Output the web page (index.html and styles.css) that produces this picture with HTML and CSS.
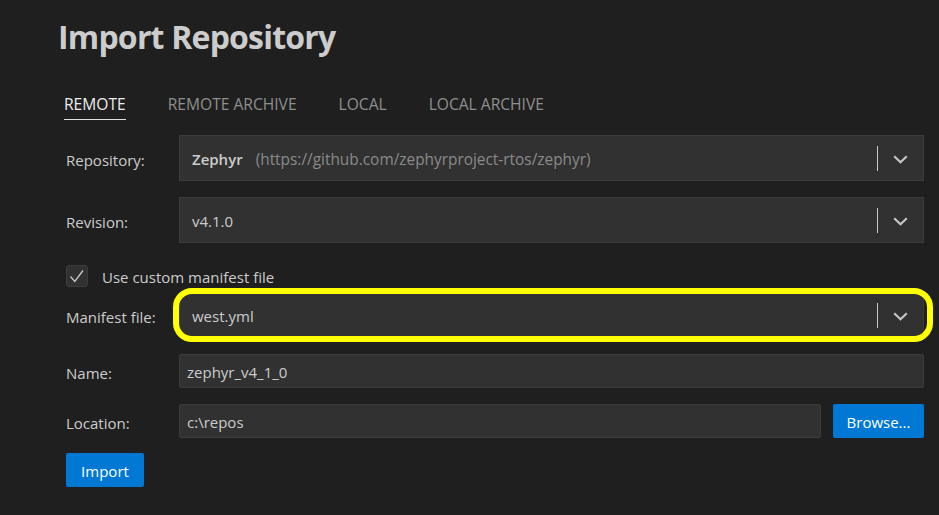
FILE: index.html
```html
<!DOCTYPE html>
<html lang="en">
  <head>
    <meta charset="UTF-8" />
    <meta name="viewport" content="width=device-width, initial-scale=1.0" />
    <title>Import Repository</title>
    <link rel="stylesheet" href="styles.css">
  </head>
  <body class="body">
    <div class="page">
      <h1 class="title">Import Repository</h1>

      <nav class="tabs">
        <span class="tab active">REMOTE</span>
        <span class="tab">REMOTE ARCHIVE</span>
        <span class="tab">LOCAL</span>
        <span class="tab">LOCAL ARCHIVE</span>
      </nav>

      <form class="form">
        <div class="row">
          <label class="label">Repository:</label>
          <div class="select">
            <span class="value"><span class="strong">Zephyr</span><span class="hint">(https://github.com/zephyrproject-rtos/zephyr)</span></span>
            <span class="sep"></span>
            <span class="chev">
              <svg width="15" height="9" viewBox="0 0 15 9"><path d="M1.2 1.2 L7.5 7.3 L13.8 1.2" fill="none" stroke="#c5c5c5" stroke-width="2.2"/></svg>
            </span>
          </div>
        </div>

        <div class="row row-wide">
          <label class="label">Revision:</label>
          <div class="select">
            <span class="value">v4.1.0</span>
            <span class="sep"></span>
            <span class="chev">
              <svg width="15" height="9" viewBox="0 0 15 9"><path d="M1.2 1.2 L7.5 7.3 L13.8 1.2" fill="none" stroke="#c5c5c5" stroke-width="2.2"/></svg>
            </span>
          </div>
        </div>

        <div class="check-row">
          <span class="checkbox">
            <svg width="22" height="22" viewBox="0 0 22 22"><path d="M4.5 11.5 L8.8 16.5 L17 5.5" fill="none" stroke="#c8c8c8" stroke-width="1.3"/></svg>
          </span>
          <span class="check-text">Use custom manifest file</span>
        </div>

        <div class="row">
          <label class="label">Manifest file:</label>
          <div class="select marked">
            <span class="value">west.yml</span>
            <span class="sep"></span>
            <span class="chev">
              <svg width="15" height="9" viewBox="0 0 15 9"><path d="M1.2 1.2 L7.5 7.3 L13.8 1.2" fill="none" stroke="#c5c5c5" stroke-width="2.2"/></svg>
            </span>
          </div>
        </div>

        <div class="row">
          <label class="label">Name:</label>
          <input type="text" class="text-input" value="zephyr_v4_1_0">
        </div>

        <div class="row row-last">
          <label class="label">Location:</label>
          <div class="location">
            <input type="text" class="text-input" value="c:\repos">
            <button type="button" class="btn browse">Browse...</button>
          </div>
        </div>

        <button type="button" class="btn import">Import</button>
      </form>
    </div>
  </body>
</html>
```

FILE: styles.css
```css
.body {
  margin: 0;
  background-color: #1f1f1f;
  color: #cccccc;
  font-family: "Open Sans", "Noto Sans", sans-serif;
  font-size: 15px;
}
.page {
  padding: 17px 15px 0 58px;
}
.title {
  margin: 0;
  font-size: 32px;
  line-height: 40px;
  font-weight: 700;
  letter-spacing: -0.8px;
  color: #cccccc;
}
.tabs {
  display: flex;
  gap: 42px;
  margin: 37px 0 0 6px;
}
.tab {
  font-size: 15.6px;
  line-height: 20px;
  padding-bottom: 5px;
  color: #8f8f8f;
  border-bottom: 1px solid transparent;
}
.tab.active {
  color: #ececec;
  border-bottom-color: #e0e0e0;
}

.form {
  margin: 15px 0 0 8px;
}
.row {
  display: grid;
  grid-template-columns: 113px 1fr;
  align-items: center;
  margin-bottom: 16px;
}
.row-wide {
  margin-bottom: 22px;
}
.row-last {
  margin-bottom: 15px;
}
.label {
  padding-top: 3px;
}

.select {
  position: relative;
  display: flex;
  align-items: center;
  height: 46px;
  box-sizing: border-box;
  background-color: #313131;
  border: 1px solid #3c3c3c;
}
.select .value {
  flex: 1;
  padding-left: 12px;
  padding-top: 2px;
}
.select .strong {
  font-weight: 600;
  margin-right: 13px;
}
.select .hint {
  color: #8a8a8a;
  font-size: 15.4px;
}
.select .sep {
  width: 1px;
  height: 25px;
  background-color: #c8c8c8;
}
.select .chev {
  width: 45px;
  display: flex;
  justify-content: center;
  padding-top: 2px;
}

/* yellow annotation ring round the manifest field */
.select.marked::after {
  content: "";
  position: absolute;
  top: -5px;
  bottom: -5px;
  left: -7px;
  right: -10px;
  border: 6px solid #ffff00;
  border-radius: 19px;
}

.check-row {
  display: flex;
  align-items: center;
  height: 22px;
  margin-bottom: 5px;
}
.checkbox {
  width: 22px;
  height: 22px;
  box-sizing: border-box;
  background-color: #313131;
  border: 1px solid #3c3c3c;
  border-radius: 3px;
  display: flex;
}
.checkbox svg {
  margin: -1px;
}
.check-text {
  margin-left: 14px;
  padding-top: 2px;
}

.text-input {
  height: 34px;
  box-sizing: border-box;
  width: 100%;
  background-color: #313131;
  border: 1px solid #3c3c3c;
  border-radius: 2px;
  color: #cccccc;
  font-family: inherit;
  font-size: 15px;
  padding: 2px 7px 0;
  outline: none;
}
.location {
  display: flex;
  gap: 12px;
}
.btn {
  height: 34px;
  border: none;
  border-radius: 2px;
  background-color: #0078d4;
  color: #ffffff;
  font-family: inherit;
  font-size: 15px;
  padding: 1px 0 0;
}
.browse {
  flex: 0 0 91px;
}
.import {
  width: 78px;
}
```
